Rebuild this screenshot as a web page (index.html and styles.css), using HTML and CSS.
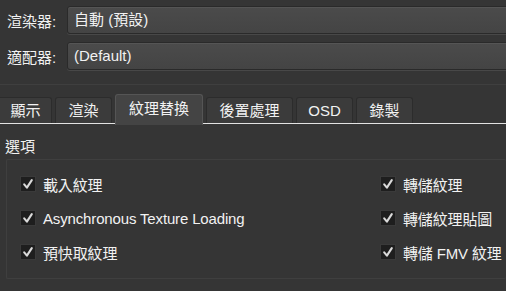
FILE: index.html
```html
<!DOCTYPE html>
<html>
<head>
<meta charset="utf-8">
<link rel="stylesheet" href="styles.css">
</head>
<body>
<div class="top">
  <div class="field">
    <span class="label">渲染器:</span>
    <div class="combo">自動 (預設)</div>
  </div>
  <div class="field">
    <span class="label">適配器:</span>
    <div class="combo">(Default)</div>
  </div>
</div>
<div class="divider"></div>
<div class="tabbar">
  <div class="tab first">顯示</div>
  <div class="tab">渲染</div>
  <div class="tab selected">紋理替換</div>
  <div class="tab wide">後置處理</div>
  <div class="tab">OSD</div>
  <div class="tab">錄製</div>
</div>
<div class="pane">
  <div class="group-title">選項</div>
  <div class="group">
    <div class="grid">
      <label class="check"><span class="box"><svg viewBox="0 0 14 14" width="14" height="14"><path d="M3.2 7.4 L5.9 10.6 L10.8 3.2" fill="none" stroke="#dadada" stroke-width="2.1" stroke-linecap="round" stroke-linejoin="round"/></svg></span><span class="txt">載入紋理</span></label>
      <label class="check"><span class="box"><svg viewBox="0 0 14 14" width="14" height="14"><path d="M3.2 7.4 L5.9 10.6 L10.8 3.2" fill="none" stroke="#dadada" stroke-width="2.1" stroke-linecap="round" stroke-linejoin="round"/></svg></span><span class="txt">轉儲紋理</span></label>
      <label class="check"><span class="box"><svg viewBox="0 0 14 14" width="14" height="14"><path d="M3.2 7.4 L5.9 10.6 L10.8 3.2" fill="none" stroke="#dadada" stroke-width="2.1" stroke-linecap="round" stroke-linejoin="round"/></svg></span><span class="txt">Asynchronous Texture Loading</span></label>
      <label class="check"><span class="box"><svg viewBox="0 0 14 14" width="14" height="14"><path d="M3.2 7.4 L5.9 10.6 L10.8 3.2" fill="none" stroke="#dadada" stroke-width="2.1" stroke-linecap="round" stroke-linejoin="round"/></svg></span><span class="txt">轉儲紋理貼圖</span></label>
      <label class="check"><span class="box"><svg viewBox="0 0 14 14" width="14" height="14"><path d="M3.2 7.4 L5.9 10.6 L10.8 3.2" fill="none" stroke="#dadada" stroke-width="2.1" stroke-linecap="round" stroke-linejoin="round"/></svg></span><span class="txt">預快取紋理</span></label>
      <label class="check"><span class="box"><svg viewBox="0 0 14 14" width="14" height="14"><path d="M3.2 7.4 L5.9 10.6 L10.8 3.2" fill="none" stroke="#dadada" stroke-width="2.1" stroke-linecap="round" stroke-linejoin="round"/></svg></span><span class="txt">轉儲 FMV 紋理</span></label>
    </div>
  </div>
</div>
</body>
</html>
```
FILE: styles.css
```css
html, body {
  margin: 0;
  padding: 0;
  background: #353535;
  color: #f2f2f2;
  font-family: "Liberation Sans", "Noto Sans CJK TC", sans-serif;
  font-size: 15px;
  overflow: hidden;
  width: 506px;
  height: 291px;
}
.top {
  display: flex;
  flex-direction: column;
  gap: 8px;
  padding-top: 6px;
}
.field {
  display: flex;
  align-items: center;
  height: 28px;
}
.label {
  width: 60px;
  padding-left: 7px;
}
.combo {
  flex: 1;
  height: 26px;
  line-height: 26px;
  margin-right: -4px;
  padding-left: 6px;
  border: 1px solid #2a2a2a;
  border-radius: 3px;
  background: linear-gradient(#4b4b4b, #444444);
  box-shadow: inset 0 1px 0 #555555, 0 1px 0 #484848;
}
.divider {
  margin-top: 14px;
  height: 1px;
  background: #3f3f3f;
}
.tabbar {
  display: flex;
  align-items: flex-end;
  gap: 3px;
  height: 38px;
  border-bottom: 1px solid #e2e2e2;
}
.tab {
  box-sizing: border-box;
  width: 57px;
  height: 26px;
  border: 1px solid #2c2c2c;
  border-bottom: none;
  border-radius: 3px 3px 0 0;
  background: #3b3b3b;
  text-align: center;
  line-height: 25px;
}
.tab.first {
  width: 52px;
  border-left: none;
  border-radius: 0 3px 0 0;
}
.tab.wide {
  width: 87px;
}
.tab.selected {
  width: 88px;
  height: 31px;
  line-height: 28px;
  margin-bottom: -2px;
  background: #444444;
  border-color: #555555;
  position: relative;
}
.pane {
  padding-top: 14px;
}
.group-title {
  padding-left: 5px;
  line-height: 18px;
  height: 20px;
}
.group {
  margin-left: 6px;
  margin-top: 1px;
  height: 120px;
  border: 1px solid #3f3f3f;
  border-right: none;
  border-radius: 2px;
  box-sizing: border-box;
  padding: 16px 0 0 13px;
}
.grid {
  display: grid;
  grid-template-columns: 360px auto;
  row-gap: 18px;
}
.check {
  display: flex;
  align-items: center;
  height: 16px;
  gap: 7px;
  white-space: nowrap;
}
.txt {
  letter-spacing: -0.15px;
}
.box {
  width: 14px;
  height: 14px;
  border: 1px solid #3a3a3a;
  background: #1e1e1e;
  flex: none;
  display: flex;
}
```
